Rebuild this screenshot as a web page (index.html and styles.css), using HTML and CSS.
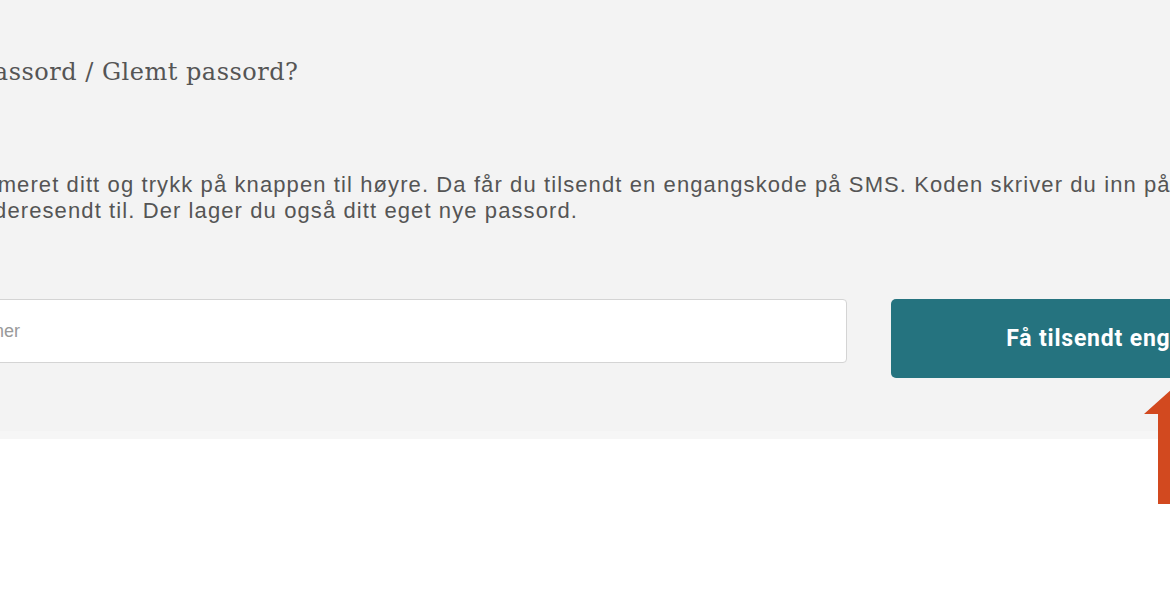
FILE: index.html
```html
<!DOCTYPE html>
<html>
<head>
  <title>Glemt passord</title>
  <link rel="stylesheet" href="styles.css">
</head>
<body>
  <div class="section">
    <div class="container">
      <h1>Nytt passord / Glemt passord?</h1>
      <p class="info">Skriv inn mobilnummeret ditt og trykk på knappen til høyre. Da får du tilsendt en engangskode på SMS. Koden skriver du inn på siden du blir<br>videresendt til. Der lager du også ditt eget nye passord.</p>
      <div class="form-row">
        <input type="text" class="phone" placeholder="Mobilnummer">
        <button class="send">Få tilsendt engangskode</button>
      </div>
    </div>
  </div>

  <svg class="arrow" width="80" height="130" viewBox="0 0 80 130">
    <polygon points="42,0 80,34 65,34 65,124 18,124 18,34 4,34" fill="#d2491f"/>
  </svg>
</body>
</html>
```

FILE: styles.css
```css
body {
  margin: 0;
  padding: 0;
  background: #fff;
  overflow: hidden;
  position: relative;
  height: 600px;
}

.section {
  background: #f3f3f3;
  height: 431px;
  border-bottom: 8px solid #f6f6f6;
  overflow: hidden;
}

.container {
  margin-left: -100px;
  width: 1600px;
  padding-top: 55px;
}

h1 {
  font-family: "DejaVu Serif", "Liberation Serif", serif;
  font-weight: normal;
  font-size: 24px;
  letter-spacing: 0.5px;
  line-height: 34px;
  color: #555;
  margin: 0;
  padding-left: 14px;
}

.info {
  font-family: "Liberation Sans", Arial, sans-serif;
  font-size: 22px;
  letter-spacing: 1.1px;
  line-height: 26px;
  color: #555;
  margin: 83px 0 0;
  padding-left: 76px;
  text-indent: -184px;
  white-space: nowrap;
}

.form-row {
  display: flex;
  align-items: flex-start;
  gap: 44px;
  margin-top: 75px;
}

.phone {
  width: 947px;
  height: 64px;
  box-sizing: border-box;
  border: 1px solid #d4d4d4;
  border-radius: 4px;
  background: #fff;
  padding: 0 10px;
  font-family: "Liberation Sans", Arial, sans-serif;
  font-size: 18px;
  color: #555;
}

.phone::placeholder {
  color: #9a9a9a;
}

.send {
  flex-shrink: 0;
  width: 502px;
  height: 79px;
  border: none;
  border-radius: 5px;
  background: #25737f;
  color: #fff;
  font-family: Roboto, "Liberation Sans", sans-serif;
  font-weight: bold;
  font-size: 23px;
  letter-spacing: 0.8px;
  cursor: pointer;
}

.arrow {
  position: absolute;
  left: 1140px;
  top: 380px;
}
```
